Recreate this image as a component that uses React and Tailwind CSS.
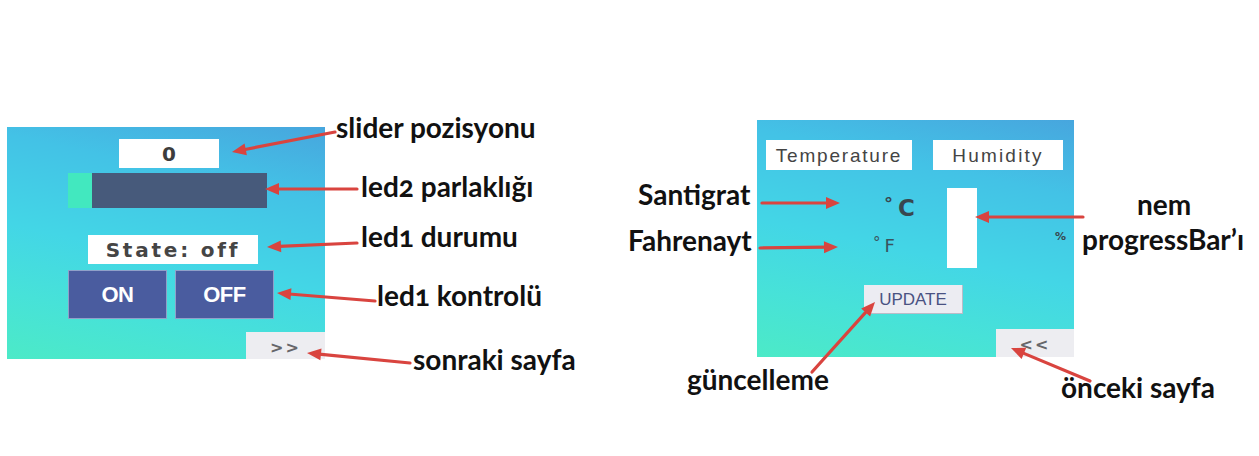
import React from "react";

const arrows = [
  [335, 132, 232, 152],
  [357, 189, 265, 189],
  [357, 243, 267, 247],
  [375, 301, 277, 293],
  [410, 363, 307, 353],
  [762, 203, 840, 203],
  [760, 248, 838, 247],
  [1083, 217, 975, 217],
  [812, 372, 875, 302],
  [1090, 381, 1011, 348],
];

const labels = [
  { t: "slider pozisyonu", x: 336, b: 138 },
  { t: "led2 parlaklığı", x: 361, b: 197 },
  { t: "led1 durumu", x: 361, b: 247 },
  { t: "led1 kontrolü", x: 377, b: 306 },
  { t: "sonraki sayfa", x: 413, b: 370 },
  { t: "Santigrat", x: 638, b: 205 },
  { t: "Fahrenayt", x: 628, b: 251 },
  { t: "güncelleme", x: 687, b: 390 },
  { t: "nem", x: 1137, b: 215 },
  { t: "progressBar’ı", x: 1082, b: 250 },
  { t: "önceki sayfa", x: 1061, b: 398 },
];

const FS = 28;

function Arrows() {
  return (
    <svg
      className="absolute left-0 top-0 pointer-events-none"
      width="1259"
      height="456"
      viewBox="0 0 1259 456"
    >
      {arrows.map(([x1, y1, x2, y2], i) => {
        const dx = x2 - x1;
        const dy = y2 - y1;
        const len = Math.hypot(dx, dy);
        const ux = dx / len;
        const uy = dy / len;
        const hl = 14;
        const hw = 6;
        const bx = x2 - ux * hl;
        const by = y2 - uy * hl;
        const px = -uy;
        const py = ux;
        return (
          <g key={i}>
            <line
              x1={x1}
              y1={y1}
              x2={bx + ux * 2}
              y2={by + uy * 2}
              stroke="#d9443f"
              strokeWidth="3.2"
              strokeLinecap="round"
            />
            <polygon
              points={`${x2},${y2} ${bx + px * hw},${by + py * hw} ${bx - px * hw},${by - py * hw}`}
              fill="#d9443f"
            />
          </g>
        );
      })}
    </svg>
  );
}

const panelBg =
  "bg-[linear-gradient(192deg,#47a6de_0%,#43c2e6_25%,#43d6e6_55%,#47e2d8_78%,#4ceac7_100%)]";

export default function App() {
  return (
    <div className="relative w-[1259px] h-[456px] bg-white overflow-hidden">
      <div className="flex items-start">
        {/* Left panel */}
        <div className={`ml-[7px] mt-[127px] w-[318px] h-[232px] flex flex-col ${panelBg}`}>
          <div className="mt-[12px] ml-[112px] w-[100px] h-[29px] bg-white flex items-center justify-center">
            <span className="font-['DejaVu_Sans',sans-serif] font-bold text-[20px] leading-none text-[#3d3d3d]">
              0
            </span>
          </div>
          <div className="mt-[5px] ml-[61px] w-[199px] h-[35px] flex">
            <div className="w-[24px] h-full bg-[#42e8bf]" />
            <div className="flex-1 h-full bg-[#475a7b]" />
          </div>
          <div className="mt-[27px] ml-[81px] w-[170px] h-[29px] bg-white flex items-center justify-center">
            <span className="font-['DejaVu_Sans',sans-serif] font-bold text-[20px] leading-none tracking-[2.8px] text-[#454545]">
              State: off
            </span>
          </div>
          <div className="mt-[6px] ml-[61px] flex gap-[8px]">
            <div className="w-[99px] h-[49px] bg-[#4a5c9f] border border-[#8fa0c9] flex items-center justify-center">
              <span className="font-['Liberation_Sans',sans-serif] font-bold text-[22px] leading-none text-white tracking-[-0.5px]">
                ON
              </span>
            </div>
            <div className="w-[99px] h-[49px] bg-[#4a5c9f] border border-[#8fa0c9] flex items-center justify-center">
              <span className="font-['Liberation_Sans',sans-serif] font-bold text-[22px] leading-none text-white tracking-[-0.5px]">
                OFF
              </span>
            </div>
          </div>
          <div className="mt-[13px] ml-[239px] w-[79px] h-[27px] bg-[#ededf1] flex items-end justify-center pb-[3px]">
            <span className="font-['DejaVu_Sans',sans-serif] font-bold text-[16px] leading-none text-[#66666a] tracking-[2px]">
              &gt;&gt;
            </span>
          </div>
        </div>

        {/* Right panel */}
        <div className={`ml-[432px] mt-[120px] w-[317px] h-[237px] flex flex-col ${panelBg}`}>
          <div className="mt-[20px] flex">
            <div className="ml-[9px] w-[146px] h-[30px] bg-white flex items-center justify-center">
              <span className="font-['Liberation_Sans',sans-serif] text-[19px] leading-none text-[#444444] tracking-[1.8px]">
                Temperature
              </span>
            </div>
            <div className="ml-[21px] w-[130px] h-[30px] bg-white flex items-center justify-center">
              <span className="font-['Liberation_Sans',sans-serif] text-[19px] leading-none text-[#444444] tracking-[2.2px]">
                Humidity
              </span>
            </div>
          </div>
          <div className="mt-[18px] h-[80px] flex">
            <div className="ml-[116px] w-[74px] flex flex-col">
              <div className="mt-[9px] ml-[11px] flex items-start gap-[5px] font-['DejaVu_Sans',sans-serif] font-bold leading-none text-[#38474f]">
                <span className="text-[18px] mt-[-2px]">°</span>
                <span className="text-[23px]">C</span>
              </div>
              <div className="mt-[17px] flex items-start gap-[4px] font-['DejaVu_Sans',sans-serif] leading-none text-[#3a535d]">
                <span className="text-[15px] mt-[-1px]">°</span>
                <span className="text-[18px]">F</span>
              </div>
            </div>
            <div className="w-[30px] h-[80px] bg-white" />
            <div className="ml-[78px] mt-[43px] font-['DejaVu_Sans',sans-serif] font-bold text-[11px] leading-none text-[#38474f]">
              %
            </div>
          </div>
          <div className="mt-[17px] ml-[107px] w-[99px] h-[29px] bg-[#ececf2] border-r border-b border-[#b9bcc8] flex items-center justify-center">
            <span className="font-['Liberation_Sans',sans-serif] text-[17px] leading-none text-[#4a5282]">
              UPDATE
            </span>
          </div>
          <div className="mt-[15px] ml-[239px] w-[78px] h-[28px] bg-[#ededf1] flex items-end justify-center pb-[4px]">
            <span className="font-['DejaVu_Sans',sans-serif] font-bold text-[16px] leading-none text-[#66666a] tracking-[2px]">
              &lt;&lt;
            </span>
          </div>
        </div>
      </div>

      {labels.map((l, i) => (
        <span
          key={i}
          className="absolute whitespace-nowrap font-['Lato',sans-serif] font-bold text-[28px] leading-none text-[#111111] oldstyle-nums"
          style={{ left: l.x, top: l.b - Math.round(FS * 0.887) }}
        >
          {l.t}
        </span>
      ))}

      <Arrows />
    </div>
  );
}
